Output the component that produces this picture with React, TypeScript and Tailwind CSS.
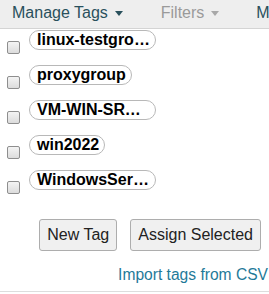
import React from 'react';

const tags = ['linux-testgroup', 'proxygroup', 'VM-WIN-SRV2019', 'win2022', 'WindowsServers'];

function Caret({ color }: { color: string }) {
  return (
    <svg width="8" height="5" viewBox="0 0 8 5" className="ml-[7px]">
      <path d="M0 0 L8 0 L4 5 Z" fill={color} />
    </svg>
  );
}

export default function App() {
  return (
    <div className="w-[269px] h-[294px] overflow-hidden bg-white font-['Liberation_Sans',Arial,sans-serif]">
      {/* Toolbar */}
      <div className="h-[29px] bg-[#eeeeee] border-b border-[#d4d4d4] flex items-center whitespace-nowrap pb-[2px]">
        <span className="ml-[12px] text-[16px] text-[#29505c] flex items-center">
          Manage Tags
          <Caret color="#29505c" />
        </span>
        <span className="ml-[38px] text-[16px] text-[#9a9a9a] flex items-center">
          Filters
          <Caret color="#a8a8a8" />
        </span>
        <span className="ml-[37px] text-[16px] text-[#29505c]">Manage</span>
      </div>

      {/* Tag list */}
      <div className="flex flex-col pt-[1px]">
        {tags.map((t) => (
          <div key={t} className="h-[35px] flex items-start">
            <span className="ml-[7px] mt-[11px] w-[13px] h-[13px] rounded-[2px] border border-[#8e8e8e] bg-gradient-to-b from-[#f4f4f4] to-[#dcdcdc] shrink-0" />
            <span className="ml-[9px] max-w-[127px] truncate rounded-full border border-[#b8b8b8] bg-white pl-[7px] pr-[5px] text-[16px] leading-[18px] font-bold text-black">
              {t}
            </span>
          </div>
        ))}
      </div>

      {/* Actions */}
      <div className="flex justify-end gap-[13px] pr-[8px] mt-[14px]">
        <button className="h-[32px] px-[7px] text-[16px] text-[#222] bg-[#f0f0f0] border border-[#adadad] rounded-[3px]">
          New Tag
        </button>
        <button className="h-[32px] px-[7px] text-[16px] text-[#222] bg-[#f0f0f0] border border-[#adadad] rounded-[3px]">
          Assign Selected
        </button>
      </div>

      <div className="flex justify-end mt-[14px] border-b border-[#dddddd] pb-[6px] whitespace-nowrap">
        <a className="text-[15.6px] leading-[20px] text-[#1f7a99] mr-[1px]">Import tags from CSV</a>
      </div>
    </div>
  );
}
